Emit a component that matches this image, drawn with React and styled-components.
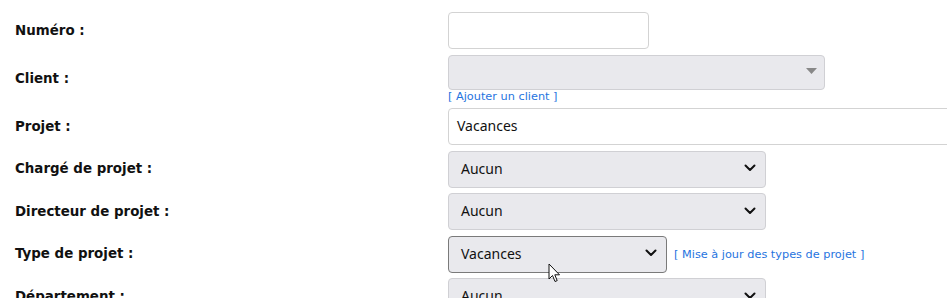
import React from 'react';
import styled, { createGlobalStyle } from 'styled-components';

const GlobalStyle = createGlobalStyle`
  html, body {
    margin: 0;
    padding: 0;
    background: #fff;
    overflow: hidden;
  }
`;

const Page = styled.div`
  position: relative;
  width: 947px;
  height: 298px;
  overflow: hidden;
  padding: 12px 0 0 15px;
  box-sizing: border-box;
`;

const Form = styled.div`
  display: grid;
  grid-template-columns: 433px 1fr;
  row-gap: 5.5px;
  align-items: center;
`;

const Label = styled.div`
  font-family: 'DejaVu Sans', Verdana, sans-serif;
  font-weight: bold;
  font-size: 13.4px;
  line-height: 16px;
  color: #111;
  white-space: nowrap;
`;

const Field = styled.div`
  display: flex;
  flex-direction: ${(p) => (p.$stack ? 'column' : 'row')};
  align-items: ${(p) => (p.$stack ? 'flex-start' : 'center')};
  gap: ${(p) => (p.$stack ? '0' : '7px')};
  min-width: 0;
`;

const TextInput = styled.div`
  box-sizing: border-box;
  width: ${(p) => p.$width}px;
  height: 37px;
  border: 1px solid #d3d3d3;
  border-radius: 4px;
  background: #fff;
  display: flex;
  align-items: center;
  padding: 0 8px 2px;
  font-family: 'Noto Sans', 'Open Sans', sans-serif;
  font-size: 14px;
  color: #111;
  flex-shrink: 0;
`;

const SelectBox = styled.div`
  box-sizing: border-box;
  width: ${(p) => p.$width}px;
  height: ${(p) => p.$height || 37}px;
  border: 1px solid ${(p) => (p.$hover ? '#7a7a7a' : '#d0d0d4')};
  border-radius: 4px;
  background: #e9e9ed;
  display: flex;
  align-items: center;
  justify-content: space-between;
  padding: 0 ${(p) => p.$padRight || 9}px 2px 12px;
  font-family: 'Noto Sans', 'Open Sans', sans-serif;
  font-size: 14px;
  color: #111;
  flex-shrink: 0;
`;

const Link = styled.a`
  font-family: 'DejaVu Sans', Verdana, sans-serif;
  font-size: 11.3px;
  line-height: 13px;
  color: #1f74e0;
  text-decoration: none;
  white-space: nowrap;
`;

const Cursor = styled.svg`
  position: absolute;
  left: 548px;
  top: 263px;
`;

const Chevron = () => (
  <svg width="12" height="8" viewBox="0 0 12 8">
    <path d="M1.5 1.5 L6 6 L10.5 1.5" fill="none" stroke="#111" strokeWidth="2" strokeLinecap="round" strokeLinejoin="round" />
  </svg>
);

const Triangle = () => (
  <svg width="11" height="6" viewBox="0 0 11 6">
    <path d="M0 0 L11 0 L5.5 6 Z" fill="#888" />
  </svg>
);

const Select = ({ value, width, hover }) => (
  <SelectBox $width={width} $hover={hover}>
    <span>{value}</span>
    <Chevron />
  </SelectBox>
);

export default function App() {
  return (
    <>
      <GlobalStyle />
      <Page>
        <Form>
          <Label>Numéro :</Label>
          <Field>
            <TextInput $width={201} />
          </Field>

          <Label>Client :</Label>
          <Field $stack>
            <SelectBox $width={377} $height={35} $padRight={7}>
              <span />
              <Triangle />
            </SelectBox>
            <Link href="#">[ Ajouter un client ]</Link>
          </Field>

          <Label>Projet :</Label>
          <Field>
            <TextInput $width={540}>Vacances</TextInput>
          </Field>

          <Label>Chargé de projet :</Label>
          <Field>
            <Select value="Aucun" width={318} />
          </Field>

          <Label>Directeur de projet :</Label>
          <Field>
            <Select value="Aucun" width={318} />
          </Field>

          <Label>Type de projet :</Label>
          <Field>
            <Select value="Vacances" width={219} hover />
            <Link href="#">[ Mise à jour des types de projet ]</Link>
          </Field>

          <Label>Département :</Label>
          <Field>
            <Select value="Aucun" width={318} />
          </Field>
        </Form>
        <Cursor width="13" height="20" viewBox="0 0 13 20">
          <path d="M1 1 L1 16 L4.5 12.5 L7 18.5 L9.2 17.6 L6.8 11.8 L11.5 11.8 Z" fill="#fff" stroke="#111" strokeWidth="1" strokeLinejoin="round" />
        </Cursor>
      </Page>
    </>
  );
}
